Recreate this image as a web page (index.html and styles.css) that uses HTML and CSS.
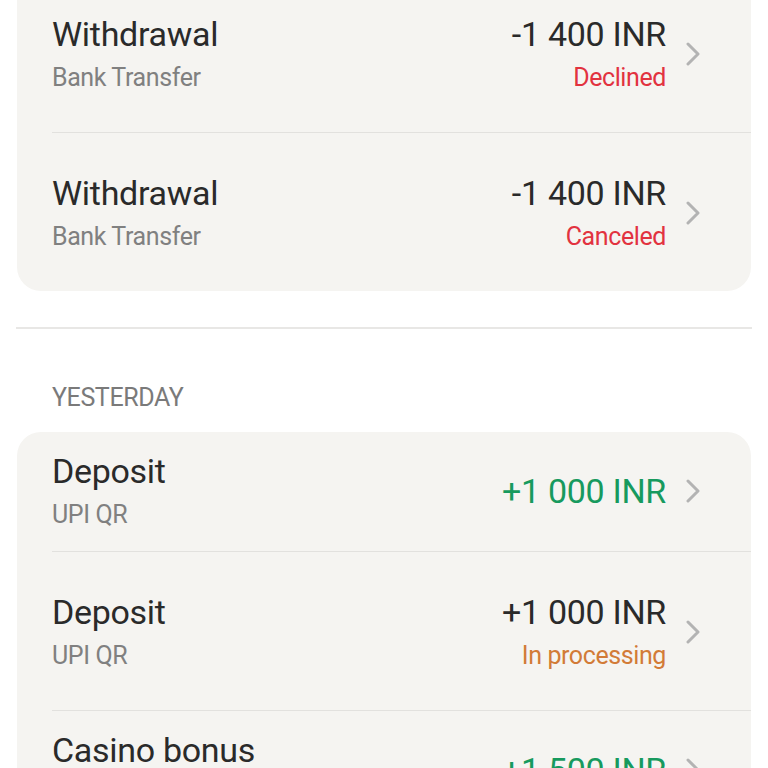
FILE: index.html
```html
<!DOCTYPE html>
<html>
<head>
<meta charset="utf-8">
<link rel="stylesheet" href="styles.css">
</head>
<body>
<div class="page">
  <div class="card card-first">
    <div class="row">
      <div class="left">
        <div class="title">Withdrawal</div>
        <div class="sub">Bank Transfer</div>
      </div>
      <div class="right">
        <div class="amount">-1 400 INR</div>
        <div class="status red">Declined</div>
      </div>
      <svg class="chev" viewBox="0 0 14 24"><path d="M2 2 L12 12 L2 22" fill="none" stroke="#b3b3b3" stroke-width="3" stroke-linecap="round" stroke-linejoin="round"/></svg>
    </div>
    <div class="row">
      <div class="left">
        <div class="title">Withdrawal</div>
        <div class="sub">Bank Transfer</div>
      </div>
      <div class="right">
        <div class="amount">-1 400 INR</div>
        <div class="status red">Canceled</div>
      </div>
      <svg class="chev" viewBox="0 0 14 24"><path d="M2 2 L12 12 L2 22" fill="none" stroke="#b3b3b3" stroke-width="3" stroke-linecap="round" stroke-linejoin="round"/></svg>
    </div>
  </div>

  <div class="sep"></div>

  <div class="day">YESTERDAY</div>

  <div class="card">
    <div class="row row-compact">
      <div class="left">
        <div class="title">Deposit</div>
        <div class="sub">UPI QR</div>
      </div>
      <div class="right">
        <div class="amount green">+1 000 INR</div>
      </div>
      <svg class="chev" viewBox="0 0 14 24"><path d="M2 2 L12 12 L2 22" fill="none" stroke="#b3b3b3" stroke-width="3" stroke-linecap="round" stroke-linejoin="round"/></svg>
    </div>
    <div class="row">
      <div class="left">
        <div class="title">Deposit</div>
        <div class="sub">UPI QR</div>
      </div>
      <div class="right">
        <div class="amount">+1 000 INR</div>
        <div class="status orange">In processing</div>
      </div>
      <svg class="chev" viewBox="0 0 14 24"><path d="M2 2 L12 12 L2 22" fill="none" stroke="#b3b3b3" stroke-width="3" stroke-linecap="round" stroke-linejoin="round"/></svg>
    </div>
    <div class="row row-compact">
      <div class="left">
        <div class="title">Casino bonus</div>
        <div class="sub">Bonus</div>
      </div>
      <div class="right">
        <div class="amount green">+1 500 INR</div>
      </div>
      <svg class="chev" viewBox="0 0 14 24"><path d="M2 2 L12 12 L2 22" fill="none" stroke="#b3b3b3" stroke-width="3" stroke-linecap="round" stroke-linejoin="round"/></svg>
    </div>
  </div>
</div>
</body>
</html>
```

FILE: styles.css
```css
html, body {
  margin: 0;
  padding: 0;
  background: #ffffff;
  overflow: hidden;
}
body {
  font-family: Roboto, "Liberation Sans", sans-serif;
  color: #2a2a2a;
}
.page {
  margin-top: -26px;
  padding: 0 17px;
}
.card {
  background: #f5f4f1;
  border-radius: 24px;
  padding-left: 35px;
}
.row {
  display: flex;
  align-items: center;
  padding: 40px 0 38px 0;
  border-top: 1px solid #e2e1de;
}
.row:first-child {
  border-top: none;
}
.row-compact {
  padding: 19px 0 20px 0;
}
.left {
  flex: 1;
}
.title {
  font-size: 34px;
  line-height: 40px;
  color: #2a2a2a;
  letter-spacing: -0.3px;
}
.sub {
  font-size: 25px;
  line-height: 32px;
  margin-top: 8px;
  color: #808080;
  letter-spacing: -0.4px;
}
.right {
  text-align: right;
}
.amount {
  font-size: 34px;
  line-height: 40px;
  color: #2a2a2a;
  letter-spacing: -0.3px;
}
.status {
  font-size: 25px;
  line-height: 32px;
  margin-top: 8px;
  letter-spacing: -0.4px;
}
.red { color: #e2323f; }
.orange { color: #d27b37; }
.green { color: #179a5e; }
.chev {
  width: 14px;
  height: 24px;
  margin-left: 20px;
  margin-right: 51px;
  flex: none;
}
.sep {
  height: 2px;
  background: #e8e7e5;
  margin: 36px -1px 0 -1px;
}
.day {
  font-size: 25px;
  line-height: 32px;
  color: #7a7a7a;
  padding: 53px 0 0 35px;
  margin-bottom: 18px;
  letter-spacing: -0.4px;
}
```
